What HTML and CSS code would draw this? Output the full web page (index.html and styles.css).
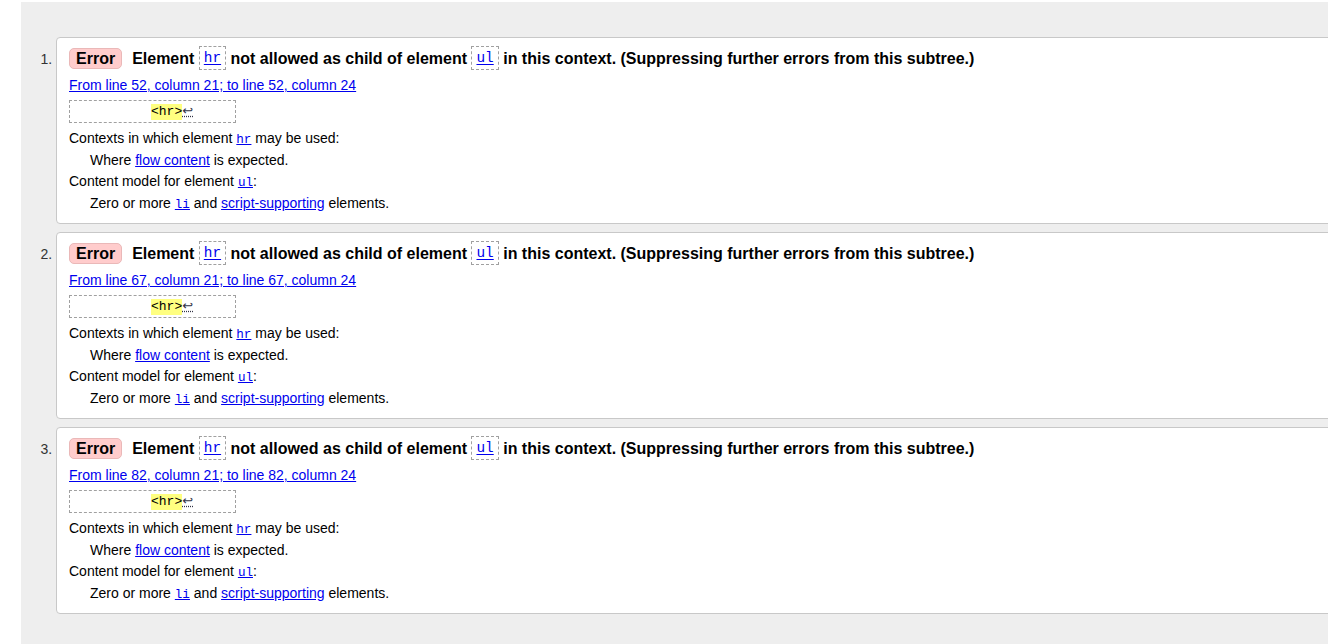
FILE: index.html
```html
<!DOCTYPE html>
<html lang="en">
<head>
<meta charset="utf-8">
<title>Validation results</title>
<link rel="stylesheet" href="styles.css">
</head>
<body>
<div class="results">
  <ol class="messages">
    <li class="error">
      <p class="msg"><strong class="badge">Error</strong><span class="text">Element <a href="#"><code class="tcode">hr</code></a> not allowed as child of element <a href="#"><code class="tcode">ul</code></a> in this context. (Suppressing further errors from this subtree.)</span></p>
      <p class="location"><a href="#">From line 52, column 21; to line 52, column 24</a></p>
      <p class="extract"><code>          <b>&lt;hr&gt;</b><abbr class="lf" title="Line break">↩</abbr>     </code></p>
      <dl class="details">
        <dt>Contexts in which element <a href="#"><code>hr</code></a> may be used:</dt>
        <dd>Where <a href="#">flow content</a> is expected.</dd>
        <dt>Content model for element <a href="#"><code>ul</code></a>:</dt>
        <dd>Zero or more <a href="#"><code>li</code></a> and <a href="#">script-supporting</a> elements.</dd>
      </dl>
    </li>
    <li class="error">
      <p class="msg"><strong class="badge">Error</strong><span class="text">Element <a href="#"><code class="tcode">hr</code></a> not allowed as child of element <a href="#"><code class="tcode">ul</code></a> in this context. (Suppressing further errors from this subtree.)</span></p>
      <p class="location"><a href="#">From line 67, column 21; to line 67, column 24</a></p>
      <p class="extract"><code>          <b>&lt;hr&gt;</b><abbr class="lf" title="Line break">↩</abbr>     </code></p>
      <dl class="details">
        <dt>Contexts in which element <a href="#"><code>hr</code></a> may be used:</dt>
        <dd>Where <a href="#">flow content</a> is expected.</dd>
        <dt>Content model for element <a href="#"><code>ul</code></a>:</dt>
        <dd>Zero or more <a href="#"><code>li</code></a> and <a href="#">script-supporting</a> elements.</dd>
      </dl>
    </li>
    <li class="error">
      <p class="msg"><strong class="badge">Error</strong><span class="text">Element <a href="#"><code class="tcode">hr</code></a> not allowed as child of element <a href="#"><code class="tcode">ul</code></a> in this context. (Suppressing further errors from this subtree.)</span></p>
      <p class="location"><a href="#">From line 82, column 21; to line 82, column 24</a></p>
      <p class="extract"><code>          <b>&lt;hr&gt;</b><abbr class="lf" title="Line break">↩</abbr>     </code></p>
      <dl class="details">
        <dt>Contexts in which element <a href="#"><code>hr</code></a> may be used:</dt>
        <dd>Where <a href="#">flow content</a> is expected.</dd>
        <dt>Content model for element <a href="#"><code>ul</code></a>:</dt>
        <dd>Zero or more <a href="#"><code>li</code></a> and <a href="#">script-supporting</a> elements.</dd>
      </dl>
    </li>
  </ol>
</div>
</body>
</html>
```
FILE: styles.css
```css
html, body {
  margin: 0;
  padding: 0;
  background: #fff;
  overflow: hidden;
}

body {
  font-family: "Liberation Sans", Arial, sans-serif;
  font-size: 14px;
  color: #000;
}

a {
  color: #0000ee;
  text-decoration: underline;
}

code {
  font-family: "Liberation Mono", "DejaVu Sans Mono", monospace;
  font-size: 0.9em;
  line-height: 14px;
}

.results {
  margin: 2px 0 0 21px;
  width: 1420px;
  min-height: 642px;
  background: #eeeeee;
  padding: 35px 0 0 35px;
  box-sizing: border-box;
}

.messages {
  margin: 0;
  padding: 0;
  list-style: decimal outside;
}

.messages li::marker {
  color: #333;
}

.error {
  background: #fff;
  border: 1px solid #c8c8c8;
  border-radius: 4px 0 0 4px;
  padding: 8px 12px 9px;
  margin-bottom: 8px;
}

.msg {
  margin: 0;
  height: 24px;
  line-height: 25px;
  font-size: 16px;
  font-weight: bold;
}

.badge {
  display: inline-block;
  line-height: 19px;
  padding: 0 6px;
  background: #ffcccc;
  border: 1px solid #eab8b8;
  border-radius: 5px;
  margin-right: 10px;
}

.tcode {
  display: inline-block;
  font-weight: normal;
  font-size: 14.4px;
  line-height: 22px;
  padding: 0 4px;
  border: 1px dashed #a0a0a0;
  vertical-align: top;
  text-decoration: underline;
  text-underline-offset: 2px;
}

.location {
  margin: 5px 0 0;
  line-height: 21px;
}

.extract {
  margin: 4px 0 0;
  width: fit-content;
  border: 1px dashed #a0a0a0;
  padding: 3px 3px 2px;
  height: 16px;
  line-height: 16px;
  font-family: "Liberation Mono", monospace;
  font-size: 13px;
}

.extract code {
  font-size: 13px;
  line-height: 16px;
  white-space: pre;
  color: #000;
}

.extract b {
  font-weight: normal;
  background: #ffff80;
  padding-bottom: 1px;
}

.lf {
  color: #334;
  text-decoration: underline dotted;
  font-family: "DejaVu Sans", sans-serif;
  font-size: 13px;
  line-height: 14px;
}

.details {
  margin: 5px 0 0;
  line-height: 21px;
}

.details dt {
  margin: 0;
  height: 21px;
}

.details dd {
  margin: 0 0 0 21px;
  padding-top: 1px;
  height: 21px;
}
```
